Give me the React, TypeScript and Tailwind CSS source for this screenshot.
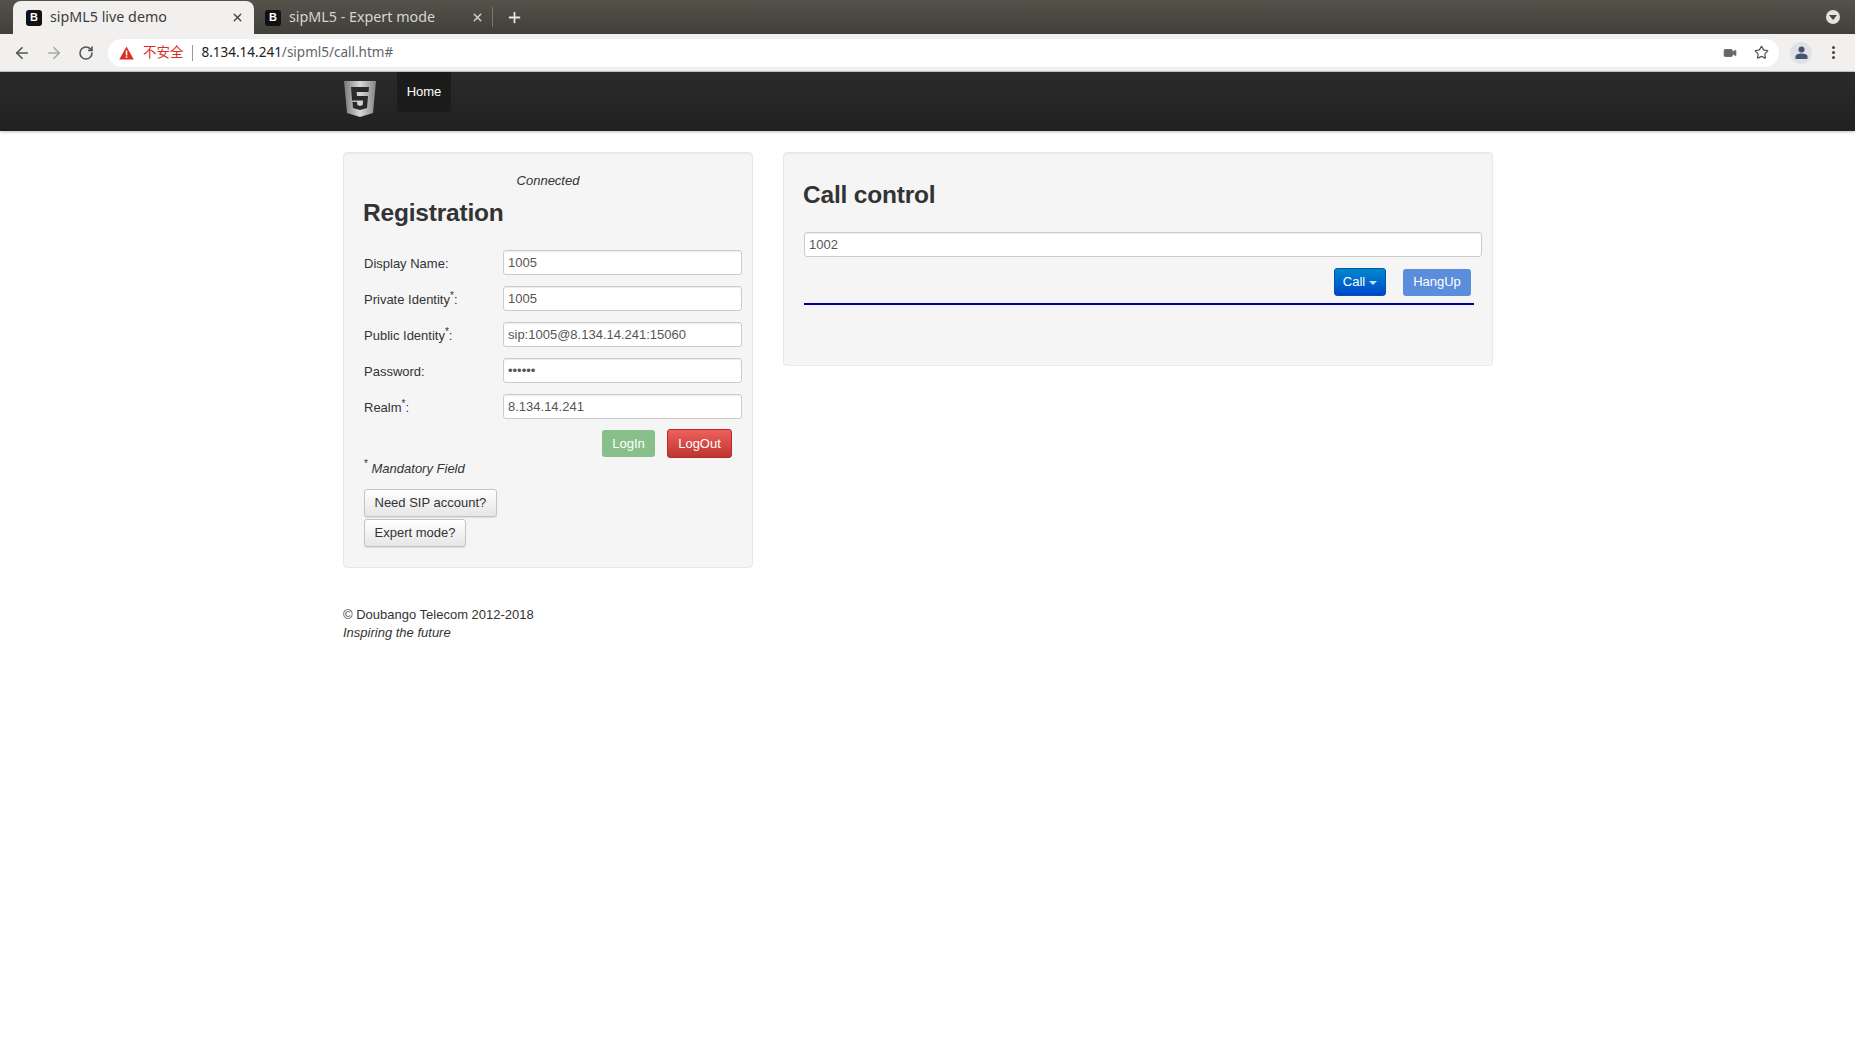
import { ArrowLeft, ArrowRight, RotateCw, Star, X, Plus, Video } from "lucide-react";

const sans = "font-['Liberation_Sans',Arial,sans-serif]";

function Favicon() {
  return (
    <span className="flex h-[16px] w-[16px] shrink-0 items-center justify-center rounded-[3px] bg-[#111] font-['Liberation_Sans',sans-serif] text-[11px] font-bold leading-none text-white">
      B
    </span>
  );
}

function Field({ label, mark, value, type = "text" }: { label: string; mark?: boolean; value: string; type?: string }) {
  return (
    <div className="flex h-[25px] items-center">
      <label className="w-[139px] shrink-0 pt-[3px] text-[13px] leading-[18px] text-[#333]">
        {label}
        {mark && <sup className="text-[10px] leading-none">*</sup>}
        :
      </label>
      <input
        readOnly
        type={type}
        value={value}
        className="h-[25px] w-[239px] rounded-[3px] border border-[#ccc] bg-white px-[4px] text-[13px] text-[#555] shadow-[inset_0_1px_1px_rgba(0,0,0,0.075)] outline-none"
      />
    </div>
  );
}

function GrayButton({ children }: { children: string }) {
  return (
    <button className="h-[28px] rounded-[3px] border border-[#c4c4c4] bg-gradient-to-b from-white to-[#e6e6e6] px-[9.5px] text-[13px] text-[#333] shadow-[0_1px_1px_rgba(0,0,0,0.1)]">
      {children}
    </button>
  );
}

export default function App() {
  return (
    <div className={`min-h-[1056px] bg-white ${sans}`}>
      {/* browser chrome */}
      <div className="flex h-[34px] items-end bg-gradient-to-b from-[#55524a] to-[#403f39] pl-[13px] pr-[15px]">
        <div className="flex h-[33px] w-[241px] items-center rounded-t-[8px] bg-[#f1f0ef] pl-[13px] pr-[10px]">
          <Favicon />
          <span className="mb-[2px] ml-[8px] flex-1 font-['Noto_Sans',sans-serif] text-[14.3px] text-[#3c3c3c]">sipML5 live demo</span>
          <X size={13} strokeWidth={2.5} className="text-[#444]" />
        </div>
        <div className="flex h-[33px] w-[238px] items-center pl-[11px] pr-[8px]">
          <Favicon />
          <span className="mb-[2px] ml-[8px] flex-1 font-['Noto_Sans',sans-serif] text-[14.3px] text-[#d6d5d0]">sipML5 - Expert mode</span>
          <X size={13} strokeWidth={2.5} className="text-[#d6d5d0]" />
        </div>
        <div className="mb-[7px] h-[20px] w-px bg-[#77756c]" />
        <Plus size={17} strokeWidth={2.5} className="mb-[8px] ml-[13px] text-[#e8e7e3]" />
        <div className="flex-1" />
        <div className="mb-[10px] flex h-[14px] w-[14px] items-center justify-center rounded-full bg-[#e4e2dc]">
          <div className="h-0 w-0 border-x-[4px] border-t-[5px] border-x-transparent border-t-[#444]" />
        </div>
      </div>
      <div className="flex h-[38px] items-center border-b border-[#c8c8c8] bg-[#f1f0ef] pl-[13px] pr-[20px]">
        <ArrowLeft size={18} strokeWidth={2.2} className="text-[#555]" />
        <ArrowRight size={18} strokeWidth={2.2} className="ml-[14px] text-[#a8a8a8]" />
        <RotateCw size={16} strokeWidth={2.4} className="ml-[15px] text-[#555]" />
        <div className="ml-[14px] flex h-[28px] flex-1 items-center rounded-full bg-white pl-[11px] pr-[10px]">
          <svg width="15" height="14" viewBox="0 0 15 14">
            <path d="M7.5 0.5 L14.8 13.5 H0.2 Z" fill="#d93025" />
            <rect x="6.8" y="4.5" width="1.5" height="5" fill="#fff" />
            <rect x="6.8" y="10.3" width="1.5" height="1.6" fill="#fff" />
          </svg>
          <span className="mb-[2px] ml-[9px] font-['Noto_Sans_CJK_SC',sans-serif] text-[13.5px] text-[#d93025]">不安全</span>
          <div className="ml-[8px] mr-[9px] h-[16px] w-px bg-[#9a9a9a]" />
          <span className="flex-1 font-['Noto_Sans',sans-serif] text-[13.5px] text-[#202124]">
            8.134.14.241<span className="text-[#5f6368]">/sipml5/call.htm#</span>
          </span>
          <Video size={14} fill="#666" strokeWidth={1.5} className="text-[#666]" />
          <Star size={15} strokeWidth={2} className="ml-[17px] text-[#555]" />
        </div>
        <div className="ml-[11px] flex h-[22px] w-[22px] items-center justify-center rounded-full bg-[#dfe1e7]">
          <svg width="13" height="13" viewBox="0 0 13 13" fill="#47536b">
            <circle cx="6.5" cy="3.5" r="3" />
            <path d="M0.5 13 V10.5 C0.5 8.5 3.5 7.5 6.5 7.5 C9.5 7.5 12.5 8.5 12.5 10.5 V13 Z" />
          </svg>
        </div>
        <div className="ml-[20px] flex flex-col gap-[2px]">
          <span className="h-[3px] w-[3px] rounded-full bg-[#444]" />
          <span className="h-[3px] w-[3px] rounded-full bg-[#444]" />
          <span className="h-[3px] w-[3px] rounded-full bg-[#444]" />
        </div>
      </div>

      {/* navbar */}
      <div className="flex h-[59px] items-start bg-gradient-to-b from-[#2b2b2b] to-[#212121] pl-[344px] shadow-[0_1px_3px_rgba(0,0,0,0.25)]">
        <svg width="32" height="36" viewBox="0 0 32 36" className="mt-[9px]">
          <defs>
            <linearGradient id="silver" x1="0" y1="0" x2="1" y2="0">
              <stop offset="0" stopColor="#777" />
              <stop offset="0.5" stopColor="#d8d8d8" />
              <stop offset="1" stopColor="#848484" />
            </linearGradient>
          </defs>
          <path d="M0 0 H32 L29 32 L16 36 L3 32 Z" fill="url(#silver)" />
          <path d="M7 6 H25 L24.5 11 H12.5 L13 15 H24 L23 27 L16 29 L9 27 L8.5 21 H13 L13.3 24 L16 25 L18.8 24 L19.2 19.5 H8 Z" fill="#2a2a2a" />
        </svg>
        <div className="ml-[21px] flex h-[40px] w-[54px] items-center justify-center bg-[#1c1c1c] text-[13px] text-white">Home</div>
      </div>

      {/* content */}
      <div className="ml-[343px] mt-[21px] flex w-[1150px] items-start gap-[30px]">
        <div className="h-[416px] w-[410px] rounded-[4px] border border-[#e8e8e8] bg-[#f5f5f5] pl-[20px] pr-[10px] pt-[19px] shadow-[inset_0_1px_1px_rgba(0,0,0,0.05)]">
          <div className="pr-[10px] text-center text-[13px] italic leading-[18px] text-[#333]">Connected</div>
          <h2 className="-ml-px mt-[3px] h-[40px] text-[24.5px] font-bold leading-[40px] tracking-[-0.2px] text-[#333]">Registration</h2>
          <div className="mt-[17px] flex flex-col gap-[11px]">
            <Field label="Display Name" value="1005" />
            <Field label="Private Identity" mark value="1005" />
            <Field label="Public Identity" mark value="sip:1005@8.134.14.241:15060" />
            <Field label="Password" type="password" value="123456" />
            <Field label="Realm" mark value="8.134.14.241" />
          </div>
          <div className="mt-[10px] flex items-center justify-end gap-[12px] pr-[10px]">
            <button className="h-[27px] w-[53px] rounded-[3px] bg-[#88bf8b] text-[13px] text-white">LogIn</button>
            <button className="h-[29px] w-[65px] rounded-[3px] border border-[#b52b27] bg-gradient-to-b from-[#ee5f5b] to-[#bd362f] text-[13px] text-white">LogOut</button>
          </div>
          <div className="mt-[2px] text-[13px] italic leading-[18px] text-[#333]">
            <sup className="align-[1px] text-[10px] not-italic leading-none">*</sup> Mandatory Field
          </div>
          <div className="mt-[11px] flex flex-col items-start gap-[2px]">
            <GrayButton>Need SIP account?</GrayButton>
            <GrayButton>Expert mode?</GrayButton>
          </div>
        </div>

        <div className="h-[214px] w-[710px] rounded-[4px] border border-[#e8e8e8] bg-[#f5f5f5] pl-[20px] pt-[22px] shadow-[inset_0_1px_1px_rgba(0,0,0,0.05)]">
          <h2 className="-ml-px h-[40px] text-[24.5px] font-bold leading-[40px] tracking-[-0.2px] text-[#333]">Call control</h2>
          <input
            readOnly
            value="1002"
            className="mt-[17px] h-[25px] w-[678px] rounded-[3px] border border-[#ccc] bg-white px-[4px] text-[13px] text-[#555] shadow-[inset_0_1px_1px_rgba(0,0,0,0.075)] outline-none"
          />
          <div className="mr-[21px] mt-[11px] flex items-center justify-end gap-[17px]">
            <button className="flex h-[28px] w-[52px] items-center justify-center gap-[4px] rounded-[3px] border border-[#0055b3] bg-gradient-to-b from-[#0088cc] to-[#0044cc] text-[13px] text-white">
              Call
              <span className="mt-[2px] h-0 w-0 border-x-[4px] border-t-[4px] border-x-transparent border-t-white/80" />
            </button>
            <button className="h-[27px] w-[68px] rounded-[3px] bg-[#5a8ddc] text-[13px] text-white">HangUp</button>
          </div>
          <div className="mr-[18px] mt-[7px] h-[2px] bg-[#000099]" />
        </div>
      </div>

      <div className="ml-[343px] mt-[38px] text-[13px] leading-[18px] text-[#333]">
        <p>© Doubango Telecom 2012-2018</p>
        <p className="italic">Inspiring the future</p>
      </div>
    </div>
  );
}
